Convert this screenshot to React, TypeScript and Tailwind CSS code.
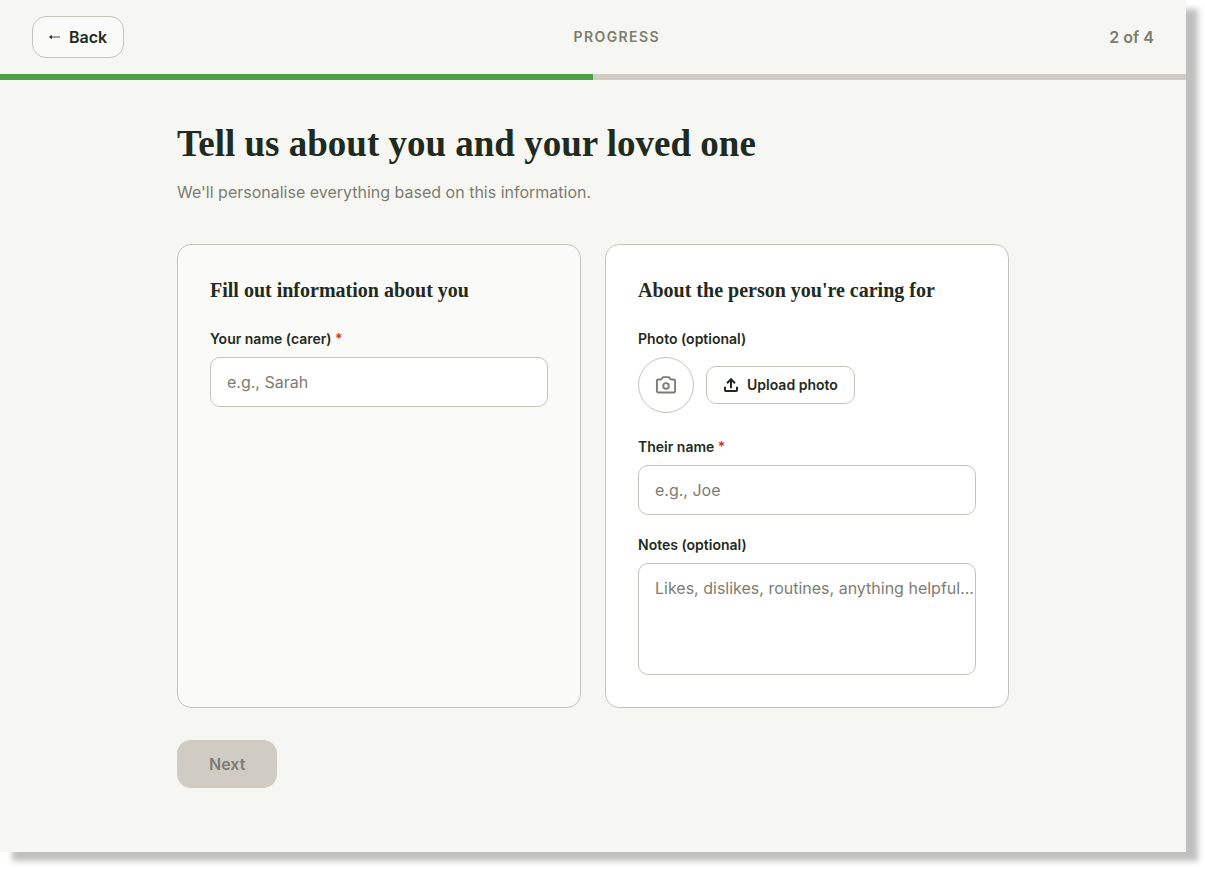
import React, { useRef } from "react";

const fieldClass =
  "block w-full rounded-[10px] border border-[#c5c4ba] bg-white pl-4 text-base leading-6 text-[#1f2a20] placeholder:text-[#7d7c70] placeholder:opacity-100 focus:outline-2 focus:outline-[#4f9f45]";

function BackArrow() {
  return (
    <svg width="12" height="8" viewBox="0 0 12 8" aria-hidden="true">
      <path d="M2 4H11" stroke="#5f665f" strokeWidth="1.2" fill="none" />
      <path d="M0 4L2.8 1.7V6.3Z" fill="#1f2a20" />
    </svg>
  );
}

function CameraIcon() {
  return (
    <svg width="24" height="24" viewBox="0 0 24 24" fill="none" stroke="#7d7c70" strokeWidth="1.9" strokeLinejoin="round" aria-hidden="true">
      <path d="M4.5 6.5H6.6C7.3 6.5 7.7 6.2 8 5.6L8.3 5C8.6 4.4 9.1 4.1 9.8 4.1H14.2C14.9 4.1 15.4 4.4 15.7 5L16 5.6C16.3 6.2 16.7 6.5 17.4 6.5H19.5C20.4 6.5 21.1 7.2 21.1 8V18C21.1 18.9 20.4 19.5 19.5 19.5H4.5C3.6 19.5 2.9 18.9 2.9 18V8C2.9 7.2 3.6 6.5 4.5 6.5Z" />
      <circle cx="12" cy="12.9" r="2.8" />
    </svg>
  );
}

function UploadIcon() {
  return (
    <svg width="16" height="16" viewBox="0 0 16 16" fill="none" stroke="#1f2a20" strokeWidth="2" aria-hidden="true">
      <path d="M8 11.2V2.6" />
      <path d="M4 6.2L8 2.2L12 6.2" />
      <path d="M2 9.8V13.2Q2 14 2.8 14H13.2Q14 14 14 13.2V9.8" />
    </svg>
  );
}

function FieldLabel({ htmlFor, required, children }: { htmlFor: string; required?: boolean; children: React.ReactNode }) {
  return (
    <label htmlFor={htmlFor} className="mb-2 block text-sm leading-5 font-semibold">
      {children}
      {required && <span className="text-[#c0392b]"> *</span>}
    </label>
  );
}

function CardTitle({ children }: { children: React.ReactNode }) {
  return (
    <h2 className="mb-[26px] font-['Liberation_Serif',serif] text-xl leading-[26px] font-bold">{children}</h2>
  );
}

export default function App() {
  const fileRef = useRef<HTMLInputElement>(null);
  return (
    <div className="flex min-h-screen bg-white pr-[19px] pb-[17px] font-['Inter',sans-serif] text-[#1f2a20]">
      <div className="flex-1 bg-[#f6f7f2] shadow-[12px_9px_6px_#bfbfbf]">
        <header>
          <div className="flex items-center justify-between px-8 py-4">
            <button type="button" className="flex items-center gap-2 rounded-[14px] border border-[#c5c4ba] bg-[#fafaf8] px-4 py-2 text-base leading-6 font-semibold">
              <BackArrow />
              Back
            </button>
            <span className="text-sm font-semibold tracking-widest text-[#7d7c70]">PROGRESS</span>
            <span className="text-base font-semibold text-[#7d7c70]">2 of 4</span>
          </div>
          <div role="progressbar" aria-label="Progress" aria-valuemin={0} aria-valuemax={4} aria-valuenow={2} className="h-1.5 bg-[#d0ccc4]">
            <div className="h-full w-1/2 bg-[#4f9f45]" />
          </div>
        </header>

        <main className="mx-auto max-w-[832px] pt-10 pb-16">
          <h1 className="font-['Liberation_Serif',serif] text-[37px] leading-12 font-bold">
            Tell us about you and your loved one
          </h1>
          <p className="mt-3 text-base leading-6 text-[#7d7c70]">
            We'll personalise everything based on this information.
          </p>

          <form className="mt-10">
            <div className="grid grid-cols-2 gap-6">
              <section className="rounded-[14px] border border-[#c5c4ba] bg-[#fafaf8] p-8">
                <CardTitle>Fill out information about you</CardTitle>
                <FieldLabel htmlFor="carer" required>Your name (carer)</FieldLabel>
                <input id="carer" type="text" placeholder="e.g., Sarah" className={`${fieldClass} py-3 pr-4`} />
              </section>

              <section className="rounded-[14px] border border-[#c5c4ba] bg-white p-8">
                <CardTitle>About the person you're caring for</CardTitle>
                <FieldLabel htmlFor="photo">Photo (optional)</FieldLabel>
                <div className="mb-6 flex items-center gap-3">
                  <div className="flex size-14 items-center justify-center rounded-full border border-[#c5c4ba]">
                    <CameraIcon />
                  </div>
                  <input ref={fileRef} id="photo" type="file" accept="image/*" className="hidden" />
                  <button type="button" onClick={() => fileRef.current?.click()} className="flex items-center gap-2 rounded-[10px] border border-[#c5c4ba] bg-white px-4 py-2 text-sm leading-5 font-semibold">
                    <UploadIcon />
                    Upload photo
                  </button>
                </div>
                <FieldLabel htmlFor="person" required>Their name</FieldLabel>
                <input id="person" type="text" placeholder="e.g., Joe" className={`${fieldClass} mb-5 py-3 pr-4`} />
                <FieldLabel htmlFor="notes">Notes (optional)</FieldLabel>
                <textarea id="notes" placeholder="Likes, dislikes, routines, anything helpful..." className={`${fieldClass} h-28 resize-none py-3`} />
              </section>
            </div>

            <button type="submit" disabled className="mt-8 rounded-[14px] bg-[#d0ccc4] px-8 py-3 text-base leading-6 font-semibold text-[#7d7c70]">
              Next
            </button>
          </form>
        </main>
      </div>
    </div>
  );
}
